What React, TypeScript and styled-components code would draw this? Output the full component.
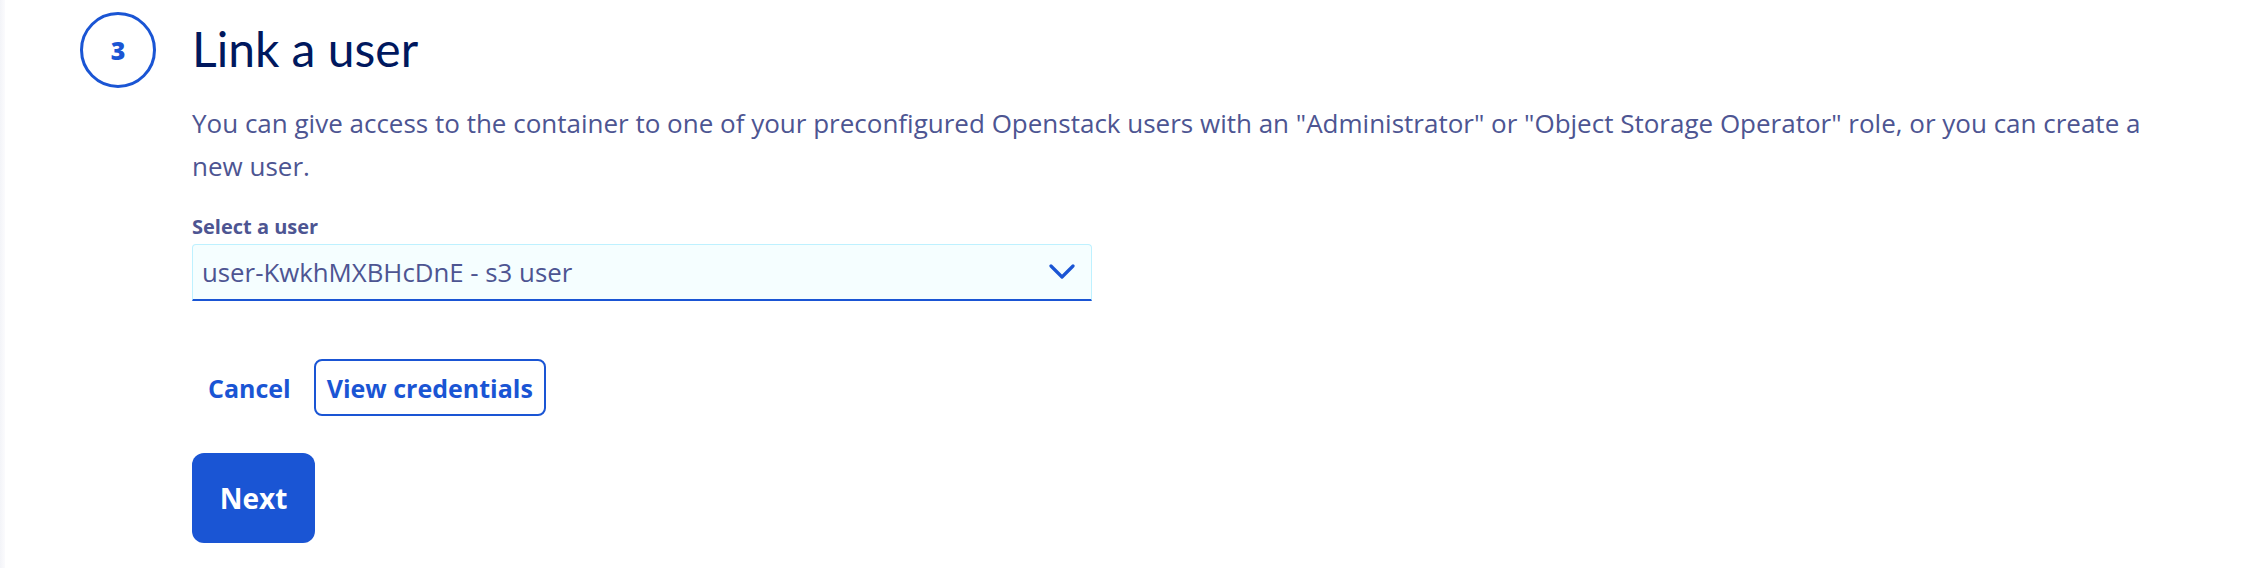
import React from "react";
import styled, { createGlobalStyle } from "styled-components";

const GlobalStyle = createGlobalStyle`
  html, body { margin: 0; padding: 0; background: #ffffff; }
  body { font-family: "Open Sans", "Noto Sans", sans-serif; }
  * { box-sizing: border-box; }
`;

const BLUE = "#1a55d4";

const Page = styled.div`
  display: flex;
  width: 2264px;
  height: 568px;
  background: #ffffff;
`;

const EdgeStrip = styled.div`
  width: 5px;
  flex: none;
  background: linear-gradient(to right, #f3f4f8, #fbfbfd);
`;

const Step = styled.section`
  display: grid;
  grid-template-columns: 76px 1fr;
  column-gap: 36px;
  padding: 12px 60px 0 75px;
  flex: 1;
  align-content: start;
`;

const StepBadge = styled.div`
  width: 76px;
  height: 76px;
  border-radius: 50%;
  border: 3px solid ${BLUE};
  color: ${BLUE};
  display: flex;
  align-items: center;
  justify-content: center;
  font-size: 25px;
  font-weight: 800;
`;

const Title = styled.h2`
  margin: 0;
  align-self: center;
  font-family: Lato, "Open Sans", sans-serif;
  font-size: 48px;
  font-weight: 400;
  color: #00185e;
  line-height: 1;
  padding-bottom: 2px;
`;

const Body = styled.div`
  grid-column: 2;
  display: flex;
  flex-direction: column;
  align-items: flex-start;
`;

const Description = styled.p`
  margin: 14px 0 0;
  font-size: 26px;
  line-height: 43px;
  color: #4d5592;
  max-width: 1975px;
`;

const Label = styled.label`
  margin-top: 27px;
  font-size: 20px;
  font-weight: 700;
  color: #4d5592;
  line-height: 24px;
`;

const SelectBox = styled.div`
  margin-top: 5px;
  width: 900px;
  height: 57px;
  background: #f5feff;
  border: 1px solid #bef1ff;
  border-bottom: 2px solid ${BLUE};
  border-radius: 4px 4px 0 0;
  display: flex;
  align-items: center;
  justify-content: space-between;
  padding: 0 16px 0 9px;
`;

const SelectValue = styled.span`
  font-size: 25.8px;
  color: #4d5592;
`;

const Actions = styled.div`
  margin-top: 58px;
  display: flex;
  align-items: center;
  gap: 7px;
`;

const GhostButton = styled.button`
  font-family: inherit;
  background: none;
  border: 2px solid transparent;
  color: ${BLUE};
  font-size: 25px;
  font-weight: 700;
  height: 57px;
  padding: 0 14px;
  border-radius: 8px;
  cursor: pointer;
`;

const OutlineButton = styled(GhostButton)`
  border-color: ${BLUE};
  padding: 0 11px;
`;

const PrimaryButton = styled.button`
  margin-top: 37px;
  font-family: inherit;
  background: ${BLUE};
  border: none;
  color: #ffffff;
  font-size: 28px;
  font-weight: 700;
  width: 123px;
  height: 90px;
  border-radius: 12px;
  cursor: pointer;
`;

const Chevron = () => (
  <svg width="26" height="16" viewBox="0 0 26 16" fill="none">
    <path d="M2 2 L13 13 L24 2" stroke={BLUE} strokeWidth="3.2" strokeLinecap="round" strokeLinejoin="round" />
  </svg>
);

export default function App() {
  return (
    <>
      <GlobalStyle />
      <Page>
        <EdgeStrip />
        <Step>
          <StepBadge>3</StepBadge>
          <Title>Link a user</Title>
          <Body>
            <Description>
              You can give access to the container to one of your preconfigured Openstack users with an
              "Administrator" or "Object Storage Operator" role, or you can create a new user.
            </Description>
            <Label>Select a user</Label>
            <SelectBox>
              <SelectValue>user-KwkhMXBHcDnE - s3 user</SelectValue>
              <Chevron />
            </SelectBox>
            <Actions>
              <GhostButton>Cancel</GhostButton>
              <OutlineButton>View credentials</OutlineButton>
            </Actions>
            <PrimaryButton>Next</PrimaryButton>
          </Body>
        </Step>
      </Page>
    </>
  );
}
